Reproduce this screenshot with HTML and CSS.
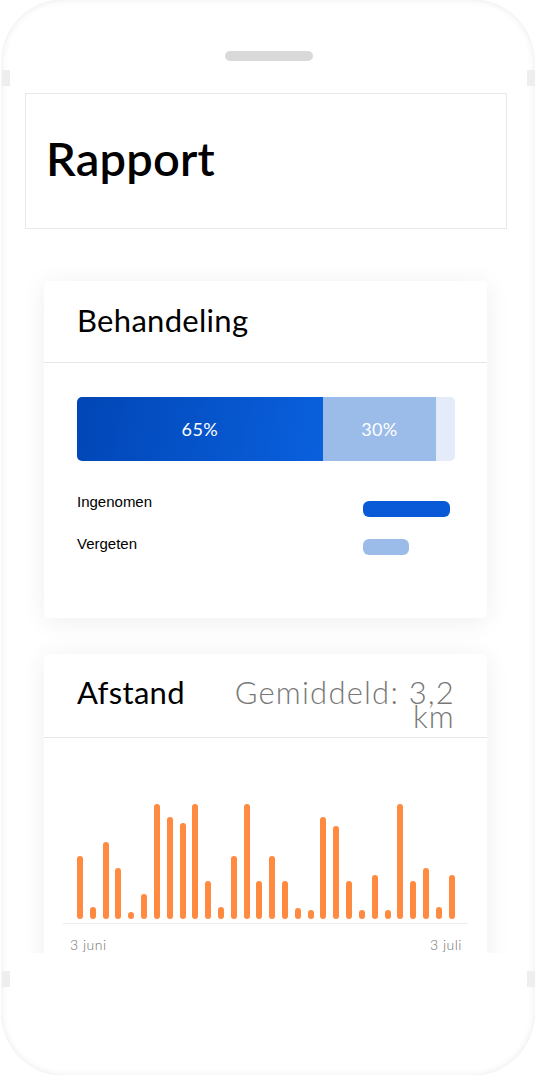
FILE: index.html
```html
<!DOCTYPE html>
<html lang="nl">
<head>
<meta charset="utf-8">
<title>Rapport</title>
<link rel="stylesheet" href="styles.css">
</head>
<body>
<div class="phone">
  <span class="side-btn side-btn--lt"></span>
  <span class="side-btn side-btn--rt"></span>
  <span class="side-btn side-btn--lb"></span>
  <span class="side-btn side-btn--rb"></span>
  <div class="speaker"></div>
  <div class="screen">
    <header class="page-header">
      <h1 class="page-title">Rapport</h1>
    </header>

    <section class="card">
      <div class="card-head">
        <h2 class="card-title">Behandeling</h2>
      </div>
      <div class="card-body treat-body">
        <div class="stack">
          <div class="seg seg--taken" style="width:65%">65%</div>
          <div class="seg seg--forgot" style="width:30%">30%</div>
          <div class="seg seg--rest" style="width:5%"></div>
        </div>
        <ul class="legend">
          <li class="legend-row"><span class="legend-label">Ingenomen</span><span class="pill pill--taken"></span></li>
          <li class="legend-row"><span class="legend-label">Vergeten</span><span class="pill pill--forgot"></span></li>
        </ul>
      </div>
    </section>

    <section class="card card--dist">
      <div class="card-head card-head--split">
        <h2 class="card-title">Afstand</h2>
        <div class="avg">Gemiddeld: 3,2 km</div>
      </div>
      <div class="card-body chart-body">
        <div class="chart">
          <span class="bar" style="height:63px"></span>
          <span class="bar" style="height:12px"></span>
          <span class="bar" style="height:77px"></span>
          <span class="bar" style="height:51px"></span>
          <span class="bar" style="height:7px"></span>
          <span class="bar" style="height:25px"></span>
          <span class="bar" style="height:115px"></span>
          <span class="bar" style="height:102px"></span>
          <span class="bar" style="height:96px"></span>
          <span class="bar" style="height:115px"></span>
          <span class="bar" style="height:38px"></span>
          <span class="bar" style="height:12px"></span>
          <span class="bar" style="height:63px"></span>
          <span class="bar" style="height:115px"></span>
          <span class="bar" style="height:38px"></span>
          <span class="bar" style="height:63px"></span>
          <span class="bar" style="height:38px"></span>
          <span class="bar" style="height:11px"></span>
          <span class="bar" style="height:9px"></span>
          <span class="bar" style="height:102px"></span>
          <span class="bar" style="height:93px"></span>
          <span class="bar" style="height:38px"></span>
          <span class="bar" style="height:9px"></span>
          <span class="bar" style="height:44px"></span>
          <span class="bar" style="height:9px"></span>
          <span class="bar" style="height:115px"></span>
          <span class="bar" style="height:38px"></span>
          <span class="bar" style="height:51px"></span>
          <span class="bar" style="height:12px"></span>
          <span class="bar" style="height:44px"></span>
        </div>
        <div class="axis">
          <span>3 juni</span>
          <span>3 juli</span>
        </div>
      </div>
    </section>
  </div>
</div>
</body>
</html>
```

FILE: styles.css
```css
* { box-sizing: border-box; }

html, body {
  margin: 0;
  padding: 0;
  background: #ffffff;
}

body {
  font-family: "Lato", "Noto Sans", sans-serif;
  color: #000;
}

.phone {
  position: relative;
  width: 532px;
  height: 1075px;
  margin: 0 0 0 2px;
  padding: 51px 0 0 23px;
  background: #ffffff;
  border-radius: 62px;
  box-shadow: 0 0 2px rgba(0, 0, 0, 0.12), inset 0 0 7px rgba(0, 0, 0, 0.07);
  display: flex;
  flex-direction: column;
}

.side-btn {
  position: absolute;
  width: 8px;
  height: 16px;
  background: #efeeee;
}
.side-btn--lt { left: 0; top: 70px; }
.side-btn--rt { right: -1px; top: 70px; }
.side-btn--lb { left: 0; top: 971px; }
.side-btn--rb { right: -1px; top: 971px; }

.speaker {
  width: 88px;
  height: 10px;
  margin-left: 200px;
  background: #d9d9d9;
  border-radius: 5px;
}

.screen {
  margin-top: 32px;
  width: 482px;
  height: 860px;
  overflow: hidden;
  display: flex;
  flex-direction: column;
  background: #fff;
}

.page-header {
  flex: none;
  height: 136px;
  border: 1px solid #e8e8e8;
  padding: 0 0 6px 20px;
  display: flex;
  align-items: center;
}

.page-title {
  margin: 0;
  font-size: 47px;
  font-weight: 600;
  letter-spacing: 0.2px;
  line-height: 1;
}

.card {
  flex: none;
  margin: 52px 20px 0 19px;
  background: #fff;
  border-radius: 5px;
  box-shadow: 0 3px 26px rgba(0, 0, 0, 0.07);
}

.card--dist {
  margin-top: 36px;
}

.card-head {
  height: 82px;
  padding: 0 33px 2px;
  border-bottom: 1px solid #e6e6e6;
  display: flex;
  align-items: center;
}

.card-title {
  margin: 0;
  font-size: 31px;
  font-weight: 400;
  line-height: 1;
  letter-spacing: 0.3px;
}

.card-head--split {
  height: 84px;
  justify-content: space-between;
  align-items: flex-start;
  padding-top: 23px;
}

.avg {
  width: 226px;
  text-align: right;
  font-size: 31px;
  font-weight: 300;
  color: #777;
  line-height: 24px;
  margin-top: 3px;
  margin-right: -1px;
  letter-spacing: 1.2px;
}

.treat-body {
  padding: 34px 32px 41px 33px;
}

.stack {
  display: flex;
  height: 64px;
  border-radius: 5px;
  overflow: hidden;
}

.seg {
  display: flex;
  align-items: center;
  justify-content: center;
  color: #fff;
  font-size: 18px;
  letter-spacing: 0.4px;
}

.seg--taken { background: linear-gradient(100deg, #0146b6 0%, #0a60dd 100%); }
.seg--forgot { background: #9bbce9; }
.seg--rest { background: #e4ecf9; }

.legend {
  list-style: none;
  margin: 32px 0 0 0;
  padding: 0;
  font-family: "Liberation Sans", Arial, sans-serif;
  font-size: 15px;
}

.legend-row {
  display: flex;
  justify-content: space-between;
  align-items: flex-start;
  height: 42px;
  padding-right: 5px;
}

.legend-label {
  line-height: 17px;
}

.pill {
  display: block;
  height: 16px;
  border-radius: 6px;
  margin-top: 8px;
}
.pill--taken { width: 87px; background: #0a59d6; }
.pill--forgot { width: 46px; margin-top: 4px; margin-right: 41px; background: #9bbce9; }

.chart-body {
  padding: 67px 19px 40px 19px;
}

.chart {
  height: 119px;
  display: flex;
  justify-content: space-between;
  align-items: flex-end;
  padding: 0 13px 4px 14px;
  border-bottom: 1px solid #ececec;
}

.bar {
  display: block;
  width: 6px;
  background: #ff8a40;
  border-radius: 3px;
}

.axis {
  display: flex;
  justify-content: space-between;
  padding: 12px 6px 0 7px;
  font-size: 14px;
  font-weight: 300;
  color: #6f6f6f;
  letter-spacing: 0.5px;
}
```
